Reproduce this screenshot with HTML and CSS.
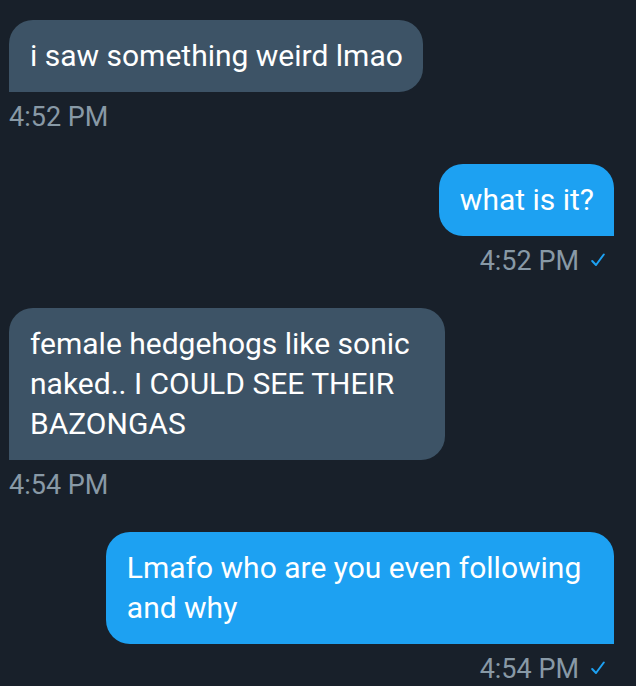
FILE: index.html
```html
<!DOCTYPE html>
<html>
<head>
<meta charset="utf-8">
<link rel="stylesheet" href="styles.css">
</head>
<body>
<div class="chat">
  <div class="msg in">
    <div class="bubble">i saw something weird lmao</div>
    <div class="meta">4:52 PM</div>
  </div>
  <div class="msg out">
    <div class="bubble">what is it?</div>
    <div class="meta">4:52 PM <svg class="check" viewBox="0 0 14 14" width="14" height="14"><path d="M1.2 8 L5 12 L12.8 1.5" fill="none" stroke="#1da1f2" stroke-width="2" stroke-linecap="round" stroke-linejoin="round"/></svg></div>
  </div>
  <div class="msg in">
    <div class="bubble">female hedgehogs like sonic naked.. I COULD SEE THEIR BAZONGAS</div>
    <div class="meta">4:54 PM</div>
  </div>
  <div class="msg out">
    <div class="bubble">Lmafo who are you even following and why</div>
    <div class="meta">4:54 PM <svg class="check" viewBox="0 0 14 14" width="14" height="14"><path d="M1.2 8 L5 12 L12.8 1.5" fill="none" stroke="#1da1f2" stroke-width="2" stroke-linecap="round" stroke-linejoin="round"/></svg></div>
  </div>
</div>
</body>
</html>
```
FILE: styles.css
```css
html, body {
  margin: 0;
  padding: 0;
  background: #18202a;
  height: 100%;
}
body {
  font-family: Roboto, "Liberation Sans", sans-serif;
  -webkit-font-smoothing: antialiased;
}
.chat {
  display: flex;
  flex-direction: column;
  padding: 20px 22px 0 9px;
  gap: 32px;
}
.msg {
  display: flex;
  flex-direction: column;
}
.msg.in {
  align-self: flex-start;
  align-items: flex-start;
  max-width: 72%;
}
.msg.out {
  align-self: flex-end;
  align-items: flex-end;
  max-width: 84%;
}
.bubble {
  font-size: 30px;
  line-height: 40px;
  color: #ffffff;
  padding: 16px 20px 16px 21px;
  border-radius: 24px;
}
.in .bubble {
  background: #3d5366;
  border-bottom-left-radius: 0;
}
.out .bubble {
  background: #1da1f2;
  border-bottom-right-radius: 0;
}
.meta {
  font-size: 27px;
  line-height: 30px;
  margin-top: 10px;
  color: #8899a6;
  display: flex;
  align-items: center;
  gap: 12px;
}
.out .meta {
  padding-right: 9px;
}
.check {
  display: block;
  margin-top: -3px;
}
```
